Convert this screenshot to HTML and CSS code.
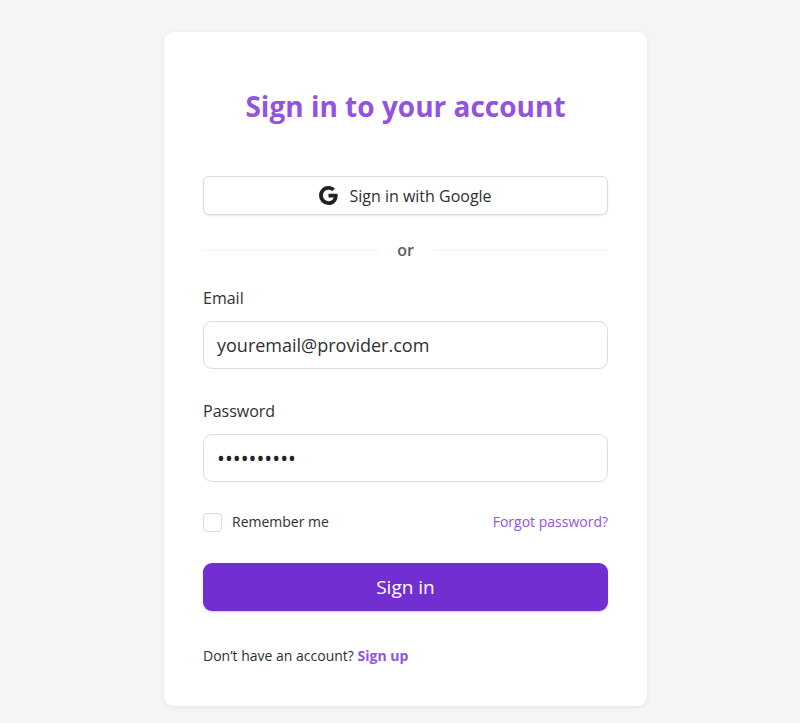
FILE: index.html
```html
<!DOCTYPE html>
<html lang="en">
<head>
<meta charset="utf-8">
<meta name="viewport" content="width=device-width, initial-scale=1">
<title>Sign in</title>
<link rel="stylesheet" href="styles.css">
</head>
<body>
<main class="card">
  <h1 class="title">Sign in to your account</h1>
  <form class="form">
    <button type="button" class="google">
      <svg class="google-icon" viewBox="2 2 20 20" aria-hidden="true"><path fill="currentColor" d="M3.064 7.51A10 10 0 0 1 12 2c2.695 0 4.959.991 6.69 2.605l-2.867 2.868C14.786 6.482 13.468 5.977 12 5.977c-2.605 0-4.81 1.76-5.595 4.123-.2.6-.314 1.24-.314 1.9s.114 1.3.314 1.9c.786 2.364 2.99 4.123 5.595 4.123 1.345 0 2.49-.355 3.386-.955a4.6 4.6 0 0 0 1.996-3.018H12v-3.868h9.418c.118.654.182 1.336.182 2.045 0 3.046-1.09 5.61-2.982 7.35C16.964 21.105 14.7 22 12 22A9.996 9.996 0 0 1 2 12c0-1.614.386-3.14 1.064-4.49z"/></svg>
      <span>Sign in with Google</span>
    </button>
    <div class="divider"><span>or</span></div>
    <div class="field">
      <label for="email">Email</label>
      <input id="email" type="email" value="youremail@provider.com">
    </div>
    <div class="field">
      <label for="password">Password</label>
      <input id="password" class="password" type="password" value="abcdefghij">
    </div>
    <div class="options">
      <label class="remember"><input type="checkbox"><span>Remember me</span></label>
      <a href="#forgot">Forgot password?</a>
    </div>
    <button type="submit" class="submit">Sign in</button>
  </form>
  <p class="signup">Don’t have an account? <a href="#signup">Sign up</a></p>
</main>
</body>
</html>
```
FILE: styles.css
```css
* {
  box-sizing: border-box;
}

body {
  margin: 0;
  padding: 32px 16px 16px 27px;
  background: #f5f5f5;
  color: #303030;
  font-family: "Segoe UI", "Open Sans", "Noto Sans", sans-serif;
  font-size: 14px;
  line-height: 20px;
}

button,
input {
  font: inherit;
  color: inherit;
}

a {
  color: #9353df;
  text-decoration: none;
}

.card {
  max-width: 483px;
  margin: 0 auto;
  padding: 54px 39px 40px;
  border-radius: 9px;
  background: #fff;
  box-shadow: 0 1px 5px rgba(0, 0, 0, 0.08);
}

.title {
  margin: 0 0 50px;
  color: #9353df;
  font-size: 28px;
  line-height: 40px;
  text-align: center;
}

.google {
  display: flex;
  align-items: center;
  justify-content: center;
  gap: 11px;
  width: 100%;
  height: 39px;
  border: 1px solid #dcdcdc;
  border-radius: 6px;
  background: #fff;
  box-shadow: 0 1px 2px rgba(0, 0, 0, 0.08);
  font-size: 16px;
}

.google-icon {
  width: 19px;
  height: 19px;
  color: #222;
}

.divider {
  display: flex;
  align-items: center;
  gap: 19px;
  margin: 23px 0 24px;
  color: #606060;
  font-size: 16px;
  font-weight: 600;
  line-height: 24px;
}

.divider::before,
.divider::after {
  content: "";
  flex: 1;
  height: 2px;
  background: #f7f7f7;
}

.field {
  margin-bottom: 30px;
}

.field label {
  display: block;
  margin-bottom: 11px;
  font-size: 16px;
  line-height: 24px;
}

.field input {
  display: block;
  width: 100%;
  height: 48px;
  padding: 0 13px;
  border: 1px solid #dcdcdc;
  border-radius: 9px;
  background: #fff;
  font-size: 18px;
}

.field .password {
  color: #222;
  font-size: 21px;
}

.options {
  display: flex;
  align-items: center;
  justify-content: space-between;
  margin-bottom: 31px;
}

.remember {
  display: flex;
  align-items: center;
  gap: 10px;
}

.remember input {
  appearance: none;
  width: 19px;
  height: 19px;
  margin: 0;
  border: 1px solid #dcdcdc;
  border-radius: 4px;
}

.remember input:checked {
  background: #722ed1;
}

.submit {
  display: block;
  width: 100%;
  height: 48px;
  border: 0;
  border-radius: 9px;
  background: #722ed1;
  box-shadow: 0 1px 2px rgba(114, 46, 209, 0.3);
  color: #fff;
  font-size: 19px;
}

.signup {
  margin: 35px 0 0;
}

.signup a {
  font-weight: 700;
}
```
